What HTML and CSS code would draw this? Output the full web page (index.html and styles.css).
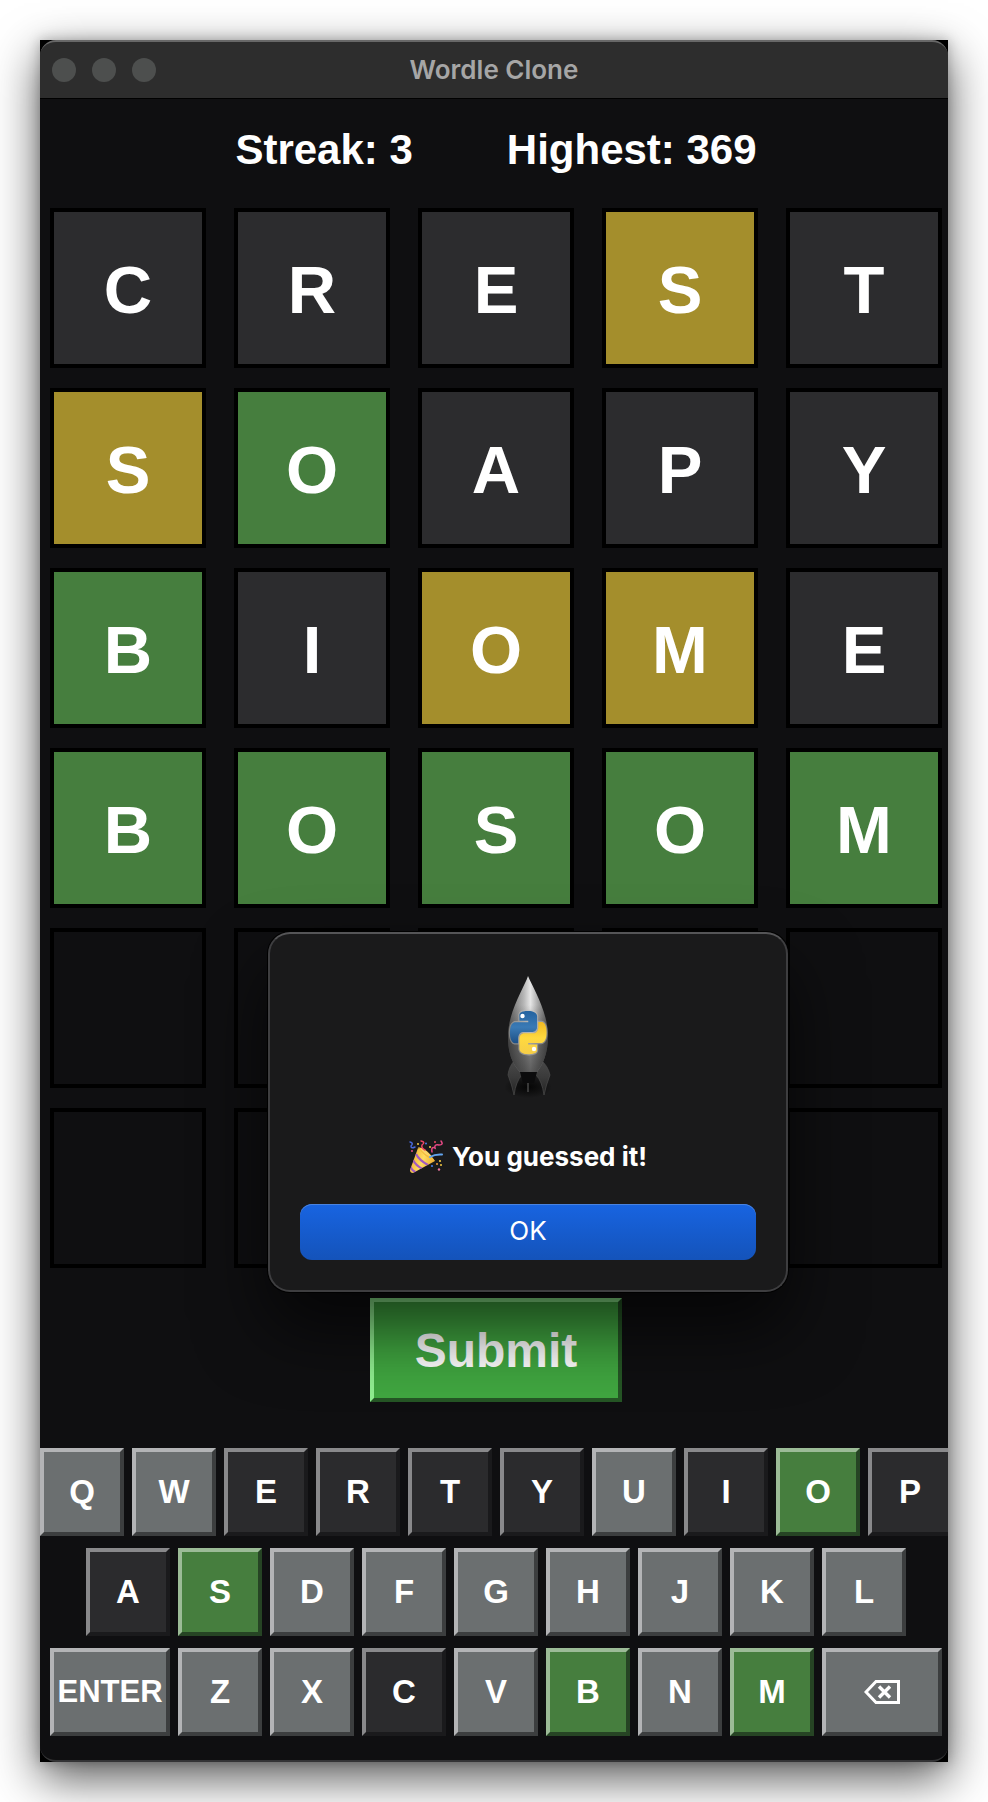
FILE: index.html
```html
<!DOCTYPE html>
<html lang="en">
<head>
<meta charset="utf-8">
<meta name="viewport" content="width=device-width, initial-scale=1">
<title>Wordle Clone</title>
<link rel="stylesheet" href="styles.css">
</head>
<body>
<main class="window">
  <header class="titlebar">
    <div class="lights"><span class="light"></span><span class="light"></span><span class="light"></span></div>
    <h1 class="title">Wordle Clone</h1>
  </header>
  <div class="content">
    <div class="stats"><span>Streak: 3</span><span>Highest: 369</span></div>
    <section class="board" aria-label="Guesses">
      <div class="tile miss">C</div><div class="tile miss">R</div><div class="tile miss">E</div><div class="tile near">S</div><div class="tile miss">T</div>
      <div class="tile near">S</div><div class="tile hit">O</div><div class="tile miss">A</div><div class="tile miss">P</div><div class="tile miss">Y</div>
      <div class="tile hit">B</div><div class="tile miss">I</div><div class="tile near">O</div><div class="tile near">M</div><div class="tile miss">E</div>
      <div class="tile hit">B</div><div class="tile hit">O</div><div class="tile hit">S</div><div class="tile hit">O</div><div class="tile hit">M</div>
      <div class="tile"></div><div class="tile"></div><div class="tile"></div><div class="tile"></div><div class="tile"></div>
      <div class="tile"></div><div class="tile"></div><div class="tile"></div><div class="tile"></div><div class="tile"></div>
    </section>
    <button class="submit" type="button">Submit</button>
    <section class="keyboard" aria-label="Keyboard">
      <div class="row row-top">
        <button class="key">Q</button><button class="key">W</button><button class="key key-miss">E</button><button class="key key-miss">R</button><button class="key key-miss">T</button><button class="key key-miss">Y</button><button class="key">U</button><button class="key key-miss">I</button><button class="key key-hit">O</button><button class="key key-miss">P</button>
      </div>
      <div class="row row-home">
        <button class="key key-miss">A</button><button class="key key-hit">S</button><button class="key">D</button><button class="key">F</button><button class="key">G</button><button class="key">H</button><button class="key">J</button><button class="key">K</button><button class="key">L</button>
      </div>
      <div class="row row-bottom">
        <button class="key key-wide">ENTER</button><button class="key">Z</button><button class="key">X</button><button class="key key-miss">C</button><button class="key">V</button><button class="key key-hit">B</button><button class="key">N</button><button class="key key-hit">M</button><button class="key key-wide" aria-label="Backspace">
          <svg class="backspace" viewBox="0 0 36 24" fill="none" stroke="#fff" stroke-width="3"><path d="M12 1.5H34.5V22.5H12L2 12Z"/><path d="M15 6.500l11 11M26 6.500l-11 11" stroke-width="3.400"/></svg>
        </button>
      </div>
    </section>
  </div>
  <div class="dialog" role="alertdialog" aria-labelledby="message">
    <svg class="rocket" viewBox="0 0 52 124" aria-hidden="true">
      <defs>
        <linearGradient id="hull" x1="0" x2="1"><stop offset="0" stop-color="#5c5c5c"/><stop offset=".2" stop-color="#8c8c8c"/><stop offset=".4" stop-color="#b8b8b8"/><stop offset=".56" stop-color="#e6e6e6"/><stop offset=".75" stop-color="#a8a8a8"/><stop offset="1" stop-color="#5a5a5a"/></linearGradient>
        <linearGradient id="shade" x1="0" x2="0" y1="0" y2="1"><stop offset=".3" stop-color="#222" stop-opacity="0"/><stop offset=".7" stop-color="#222" stop-opacity=".5"/><stop offset="1" stop-color="#222" stop-opacity=".7"/></linearGradient>
        <linearGradient id="fin" x1="0" x2="0" y1="0" y2="1"><stop offset="0" stop-color="#4a4a4a"/><stop offset=".5" stop-color="#3a3a3a"/><stop offset="1" stop-color="#222"/></linearGradient>
        <linearGradient id="blue" x1="0" x2="0" y1="0" y2="1"><stop offset="0" stop-color="#2463a0"/><stop offset=".5" stop-color="#3a7ab5"/><stop offset="1" stop-color="#1d4f85"/></linearGradient>
        <linearGradient id="yellow" x1="0" x2="0" y1="0" y2="1"><stop offset="0" stop-color="#f5cd48"/><stop offset=".5" stop-color="#ffd93f"/><stop offset="1" stop-color="#efb822"/></linearGradient>
        <radialGradient id="glow"><stop offset="0" stop-color="#050505"/><stop offset="1" stop-color="#050505" stop-opacity="0"/></radialGradient>
      </defs>
      <ellipse cx="26" cy="113" rx="24" ry="11" fill="url(#glow)"/>
      <path d="M13 86Q7 92 6 101Q10 111 12 121Q14 107 20 101L18 92Z" fill="url(#fin)" stroke="#4c4c4c" stroke-width=".7"/>
      <path d="M39 86Q46 92 48 101Q44 111 42 121Q40 107 34 101L35 92Z" fill="url(#fin)" stroke="#4c4c4c" stroke-width=".7"/>
      <path d="M18 98H35L32 109H21Z" fill="#0b0b0c"/><path d="M26 109v9" stroke="#484848" stroke-width="1.500"/>
      <path d="M26 2C31 14 46 37 46 63C46 78 41 91 35 98H18C10 90 6 78 6 63C6 37 22 14 26 2Z" fill="url(#hull)"/>
      <path d="M26 2C31 14 46 37 46 63C46 78 41 91 35 98H18C10 90 6 78 6 63C6 37 22 14 26 2Z" fill="url(#shade)"/>
      <g transform="translate(8 37) scale(1.520 1.800)" stroke="#c4c4c0" stroke-opacity=".45" stroke-width="1.400" paint-order="stroke">
        <path fill="url(#blue)" d="M14.25.18l.9.2.73.26.59.3.45.32.34.34.25.34.16.33.1.3.04.26.02.2-.01.13V8.500l-.05.63-.13.55-.21.46-.26.38-.3.31-.33.25-.35.19-.35.14-.33.1-.3.07-.26.04-.21.02H8.770l-.69.05-.59.14-.5.22-.41.27-.33.32-.27.35-.2.36-.15.37-.1.35-.07.32-.04.27-.02.21v3.060H3.170l-.21-.03-.28-.07-.32-.12-.35-.18-.36-.26-.36-.36-.35-.46-.32-.59-.28-.73-.21-.88-.14-1.050-.05-1.230.06-1.220.16-1.040.24-.87.32-.71.36-.57.4-.44.42-.33.42-.24.4-.16.36-.1.32-.05.24-.01h.16l.06.01h8.160v-.83H6.180l-.01-2.750-.02-.37.05-.34.11-.31.17-.28.25-.26.31-.23.38-.2.44-.18.51-.15.58-.12.64-.1.71-.06.77-.04.84-.02 1.270.05z"/>
        <path transform="rotate(180 12 12)" fill="url(#yellow)" d="M14.25.18l.9.2.73.26.59.3.45.32.34.34.25.34.16.33.1.3.04.26.02.2-.01.13V8.500l-.05.63-.13.55-.21.46-.26.38-.3.31-.33.25-.35.19-.35.14-.33.1-.3.07-.26.04-.21.02H8.770l-.69.05-.59.14-.5.22-.41.27-.33.32-.27.35-.2.36-.15.37-.1.35-.07.32-.04.27-.02.21v3.060H3.170l-.21-.03-.28-.07-.32-.12-.35-.18-.36-.26-.36-.36-.35-.46-.32-.59-.28-.73-.21-.88-.14-1.050-.05-1.230.06-1.220.16-1.040.24-.87.32-.71.36-.57.4-.44.42-.33.42-.24.4-.16.36-.1.32-.05.24-.01h.16l.06.01h8.160v-.83H6.180l-.01-2.750-.02-.37.05-.34.11-.31.17-.28.25-.26.31-.23.38-.2.44-.18.51-.15.58-.12.64-.1.71-.06.77-.04.84-.02 1.270.05z"/>
      </g>
      <circle cx="20.500" cy="42" r="2.200" fill="#fff"/><circle cx="32" cy="75" r="2.200" fill="#fff"/>
    </svg>
    <p class="message" id="message">
      <svg class="popper" viewBox="0 0 34 34" aria-label="Party popper">
        <defs>
          <linearGradient id="cone" x1="0" x2="1" y1=".3" y2=".7"><stop offset="0" stop-color="#f0ac2c"/><stop offset=".5" stop-color="#ffdc62"/><stop offset="1" stop-color="#e9a42b"/></linearGradient>
          <clipPath id="coneclip"><path d="M9 8Q18 11 26 21L4 33Q1 33 1 30Z"/></clipPath>
        </defs>
        <path d="M9 8Q18 11 26 21L4 33Q1 33 1 30Z" fill="url(#cone)"/>
        <g clip-path="url(#coneclip)" fill="none" stroke="#a25ac0" stroke-width="2.200"><path d="M7 14Q10 20 19 25M4 20Q7 26 14 29M1 26Q3 31 8 33"/></g>
        <path d="M9 7Q18 8 26 21Q15 17 9 7Z" fill="#f4bb3b"/><path d="M11 8Q18 10 23 17Q15 15 11 8Z" fill="#f9d46a"/>
        <g fill="none" stroke-linecap="round" stroke-width="1.500">
          <path d="M21 17Q26 14 33 14.500" stroke="#62a4ee" stroke-width="2"/>
          <path d="M1 2Q5 3 2 6Q2 9 6 7" stroke="#4868d8"/>
          <path d="M12 1Q17 2 13 5Q12 8 16 10" stroke="#ee4465"/>
          <path d="M32 1Q35 5 30 5Q25 4 26 8Q22 6 23 12" stroke="#e84a86"/>
        </g>
        <g><circle cx="9" cy="4" r="1" fill="#f4cb45"/><circle cx="17" cy="3.500" r="1" fill="#4d7de4"/><circle cx="21" cy="7" r="1" fill="#f4cb45"/><circle cx="3" cy="11" r="1" fill="#ed4c7c"/><circle cx="26" cy="2" r="1" fill="#e84a63"/><circle cx="31" cy="21" r="1.100" fill="#f4cb45"/><circle cx="28" cy="24" r="1" fill="#f29d33"/><circle cx="23" cy="26" r="1.100" fill="#477be0"/><circle cx="30" cy="29.500" r="1.200" fill="#ef76a0"/><circle cx="32" cy="25" r="1" fill="#f4cb45"/></g>
      </svg>
      <span>You guessed it!</span>
    </p>
    <button class="ok" type="button">OK</button>
  </div>
</main>
</body>
</html>
```
FILE: styles.css
```css
* { box-sizing: border-box; }
body {
  margin: 0;
  padding: 40px;
  background: #fff;
  font-family: "Liberation Sans", Arial, sans-serif;
  color: #fff;
}
button { font: inherit; color: inherit; margin: 0; padding: 0; }

.window {
  position: relative;
  background: #000;
  box-shadow: 0 16px 44px rgba(0, 0, 0, .66), 0 0 12px rgba(0, 0, 0, .25);
}
.titlebar {
  position: relative;
  height: 59px;
  display: flex;
  align-items: center;
  justify-content: center;
  background: #2d2d2d;
  border-top: 2px solid #686868;
  border-bottom: 1px solid #000;
  border-radius: 16px 16px 0 0;
}
.lights {
  position: absolute;
  left: 12px;
  display: flex;
  gap: 16px;
}
.light { width: 24px; height: 24px; border-radius: 50%; background: #4d4f4e; }
.title {
  margin: 0;
  font: 600 26px/32px Inter, sans-serif;
  color: #a6a6a6;
}
.content {
  display: flex;
  flex-direction: column;
  background: #0f0f11;
  border-bottom: 2px solid #333335;
  border-radius: 0 0 16px 16px;
  padding-bottom: 24px;
  overflow: hidden;
}
.stats {
  display: flex;
  justify-content: center;
  gap: 94px;
  padding: 27px 0 34px 4px;
  font-size: 42px;
  line-height: 48px;
  font-weight: bold;
}
.board {
  display: grid;
  grid-template-columns: repeat(5, 1fr);
  gap: 20px 28px;
  padding: 0 6px 0 10px;
}
.tile {
  height: 160px;
  display: flex;
  align-items: center;
  justify-content: center;
  padding-top: 2px;
  border: 4px solid #000;
  font-size: 67px;
  font-weight: bold;
}
.miss { background: #2c2c2e; }
.near { background: #a48e2c; }
.hit { background: #467e3e; }

.submit {
  align-self: center;
  width: 252px;
  height: 104px;
  margin: 30px 0 46px 4px;
  background: #40a640;
  border: 4px solid;
  border-color: #90ee90 #255525 #255525 #90ee90;
  font-size: 48px;
  font-weight: bold;
}
.keyboard { display: flex; flex-direction: column; gap: 12px; }
.row { display: flex; gap: 8px; }
.row-top { margin-right: -4px; }
.row-home { padding: 0 42px 0 46px; }
.row-bottom { padding: 0 6px 0 10px; }
.key {
  flex: 19 1 0;
  min-width: 0;
  height: 88px;
  display: flex;
  align-items: center;
  justify-content: center;
  background: #6b6f70;
  border: 4px solid;
  border-color: #b3b4b6 #3c3e3f #3c3e3f #b3b4b6;
  font-size: 33px;
  font-weight: bold;
}
.key-miss { background: #2b2b2d; border-color: #89898b #1a1a1c #1a1a1c #89898b; }
.key-hit { background: #467e3e; border-color: #9cbb97 #264424 #264424 #9cbb97; }
.key-wide { flex-grow: 28; font-size: 31px; }
.backspace { width: 36px; height: 24px; }

.dialog {
  position: absolute;
  top: 892px;
  left: 228px;
  right: 160px;
  display: flex;
  flex-direction: column;
  align-items: center;
  padding: 40px 30px 30px;
  background: #1a1a1b;
  border: 2px solid #3e3e40;
  border-top-color: #555557;
  border-radius: 22px;
  box-shadow: 0 0 0 1px #000, 0 36px 70px rgba(0, 0, 0, .65);
}
.rocket { width: 52px; height: 124px; }
.message {
  display: flex;
  align-items: center;
  gap: 9px;
  margin: 41px 0 29px;
  font: 700 26px/36px Inter, sans-serif;
}
.popper { width: 34px; height: 34px; }
.ok {
  width: 100%;
  height: 56px;
  padding-bottom: 2px;
  border: 0;
  border-radius: 12px;
  background: linear-gradient(#1864e1, #1453ba);
  box-shadow: inset 0 1px #4a83df;
  font: 400 26px/32px Inter, sans-serif;
}
```
